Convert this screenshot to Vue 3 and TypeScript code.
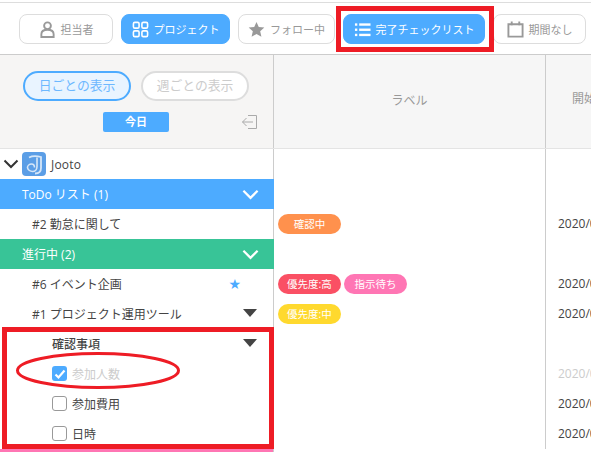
<script setup lang="ts">
const tools = [
  { label: "担当者", icon: "user", on: false, w: 94 },
  { label: "プロジェクト", icon: "grid", on: true, w: 109 },
  { label: "フォロー中", icon: "star", on: false, w: 97 },
  { label: "完了チェックリスト", icon: "list", on: true, w: 142 },
  { label: "期間なし", icon: "cal", on: false, w: 93 },
]

const rows = [
  { kind: "project", text: "Jooto" },
  { kind: "todo", text: "ToDo リスト (1)" },
  { kind: "task", text: "#2 勤怠に関して", tags: [{ t: "確認中", c: "#ff914d" }], date: "2020/0" },
  { kind: "doing", text: "進行中 (2)" },
  { kind: "task", text: "#6 イベント企画", star: true, tags: [{ t: "優先度:高", c: "#fa5064" }, { t: "指示待ち", c: "#ff76b4" }], date: "2020/0" },
  { kind: "task", text: "#1 プロジェクト運用ツール", arrow: true, tags: [{ t: "優先度:中", c: "#ffd92e" }], date: "2020/0" },
  { kind: "group", text: "確認事項", arrow: true },
  { kind: "check", text: "参加人数", done: true, date: "2020/0" },
  { kind: "check", text: "参加費用", date: "2020/0" },
  { kind: "check", text: "日時", date: "2020/0" },
]
</script>

<template>
  <div class="page">
    <div class="toolbar">
      <button v-for="b in tools" :key="b.label" class="tool" :class="{ on: b.on }" :style="{ width: b.w + 'px' }">
        <svg v-if="b.icon === 'user'" class="ic" viewBox="0 0 18 18" fill="none" stroke="currentColor" stroke-width="2">
          <circle cx="9" cy="5" r="3.6" />
          <path d="M2.500 17v-3c0-3 2.700-4.800 6.500-4.800s6.500 1.800 6.500 4.800v3z" />
        </svg>
        <svg v-else-if="b.icon === 'grid'" class="ic" viewBox="0 0 18 18" fill="none" stroke="currentColor" stroke-width="1.700">
          <rect x="1.500" y="1.500" width="6" height="6" rx="1.500" />
          <rect x="10.500" y="1.500" width="6" height="6" rx="1.500" />
          <rect x="1.500" y="10.500" width="6" height="6" rx="1.500" />
          <rect x="10.500" y="10.500" width="6" height="6" rx="1.500" />
        </svg>
        <svg v-else-if="b.icon === 'star'" class="ic" viewBox="0 0 18 18" fill="currentColor">
          <path d="M9 1l2.400 5.400 5.900.6-4.400 3.900 1.300 5.800L9 13.700l-5.200 3 1.300-5.800L.7 7l5.900-.6z" />
        </svg>
        <svg v-else-if="b.icon === 'list'" class="ic" viewBox="0 0 18 18" fill="currentColor">
          <rect x="1" y="2.500" width="2.500" height="2.500" />
          <rect x="1" y="8" width="2.500" height="2.500" />
          <rect x="1" y="13.500" width="2.500" height="2.500" />
          <rect x="5.500" y="2.500" width="12" height="2.500" />
          <rect x="5.500" y="8" width="12" height="2.500" />
          <rect x="5.500" y="13.500" width="12" height="2.500" />
        </svg>
        <svg v-else class="ic" viewBox="0 0 18 18" fill="none" stroke="currentColor" stroke-width="2">
          <path d="M1.500 3.500h15v13h-15z" />
          <path d="M5 .5v4M13 .5v4" />
        </svg>
        <span>{{ b.label }}</span>
      </button>
    </div>

    <div class="head">
      <div class="head-left">
        <div class="modes">
          <span class="mode active">日ごとの表示</span>
          <span class="mode">週ごとの表示</span>
        </div>
        <div class="today-line">
          <span class="today">今日</span>
          <svg class="exit" viewBox="0 0 18 16" fill="none" stroke="#aaa" stroke-width="1">
            <path d="M7 1.500h8.500v13H7" />
            <path d="M12 8H1.500M5.500 4l-4 4 4 4" />
          </svg>
        </div>
      </div>
      <div class="head-label">ラベル</div>
      <div class="head-date">開始日</div>
    </div>

    <div class="body">
      <div v-for="(r, i) in rows" :key="i" class="row">
        <div class="name" :class="r.kind">
          <template v-if="r.kind === 'project'">
            <svg class="caret" viewBox="0 0 16 10" fill="none" stroke="#333" stroke-width="2">
              <path d="M1.500 1.500L8 8l6.500-6.500" />
            </svg>
            <svg class="logo" viewBox="0 0 24 24" fill="none" stroke="#d5e6f8">
              <rect width="24" height="24" rx="4" fill="#5b9ee6" stroke="none" />
              <path d="M7 5.500c3-1.500 8-1.500 12-.5v11c0 3.500-2.500 5.500-6 5.500" stroke-width="1.800" />
              <path d="M15 5.500v9c0 3-2 5-4.500 5S5.500 17.500 5.500 15.500 7.500 12 9.500 12s3 1.700 3 3.500" stroke-width="1.600" />
            </svg>
          </template>
          <span v-if="r.kind === 'check'" class="box" :class="{ done: r.done }">
            <svg v-if="r.done" viewBox="0 0 14 14" fill="none" stroke="#fff" stroke-width="2.200">
              <path d="M2.500 7.500l3 3 6-7" />
            </svg>
          </span>
          <span class="txt" :class="{ faded: r.done }">{{ r.text }}</span>
          <svg v-if="r.kind === 'todo' || r.kind === 'doing'" class="fold" viewBox="0 0 18 11" fill="none" stroke="#fff" stroke-width="2.400">
            <path d="M1.500 1.500L9 9l7.500-7.500" />
          </svg>
          <span v-if="r.star" class="star">★</span>
          <span v-if="r.arrow" class="tri"></span>
        </div>
        <div class="labels">
          <span v-for="t in r.tags" :key="t.t" class="tag" :style="{ background: t.c }">{{ t.t }}</span>
        </div>
        <div class="date" :class="{ faded: r.done }">{{ r.date }}</div>
      </div>
      <div class="row"><div class="name pink"></div></div>
    </div>

    <div class="mark mark-btn"></div>
    <div class="mark mark-list"></div>
    <svg class="mark-oval" viewBox="0 0 166 40" fill="none" stroke="#ee1c25" stroke-width="3">
      <ellipse cx="83" cy="19.500" rx="80.500" ry="17" />
    </svg>
  </div>
</template>

<style scoped>
.page {
  position: relative;
  width: 591px;
  height: 452px;
  overflow: hidden;
  background: #fff;
  font-family: "Open Sans", "Noto Sans CJK JP", sans-serif;
  font-size: 12px;
  color: #444;
}
.toolbar {
  display: flex;
  gap: 8px;
  height: 53px;
  margin-top: 2px;
  padding: 11px 0 0 19px;
  box-sizing: border-box;
  border-top: 1px solid #ddd;
  border-bottom: 1px solid #ccc;
}
.tool {
  display: flex;
  align-items: center;
  justify-content: center;
  gap: 5px;
  flex: none;
  height: 30px;
  padding: 0;
  border: 1px solid #ddd;
  border-radius: 8px;
  background: #fff;
  color: #999;
  font: inherit;
  font-size: 11px;
}
.tool.on {
  background: #4dabff;
  border-color: #4dabff;
  color: #fff;
}
.ic {
  width: 17px;
  height: 17px;
  flex: none;
}
.head {
  display: flex;
  height: 94px;
  border-bottom: 1px solid #e4e4e4;
  box-sizing: border-box;
  background: #f6f6f6;
}
.head-left {
  width: 274px;
  flex: none;
  box-sizing: border-box;
  border-right: 1px solid #ccc;
  background: #f6f5f4;
  padding-top: 16px;
}
.modes {
  display: flex;
  gap: 10px;
  padding-left: 23px;
}
.mode {
  width: 108px;
  height: 30px;
  box-sizing: border-box;
  border: 2px solid #ddd;
  border-radius: 15px;
  background: #fff;
  color: #ccc;
  font-size: 12.800px;
  line-height: 25px;
  text-align: center;
}
.mode.active {
  border-color: #4dabff;
  background: #e9f4ff;
  color: #6db8ff;
}
.today-line {
  display: flex;
  margin-top: 11px;
  padding-left: 103px;
  align-items: center;
}
.today {
  width: 66px;
  height: 20px;
  border-radius: 2px;
  background: #4dabff;
  color: #fff;
  font-size: 11px;
  font-weight: 700;
  line-height: 20px;
  text-align: center;
}
.exit {
  width: 18px;
  height: 16px;
  margin-left: 72px;
}
.head-label {
  width: 272px;
  flex: none;
  box-sizing: border-box;
  border-right: 1px solid #ccc;
  color: #999;
  font-size: 12px;
  text-align: center;
  padding-top: 36px;
}
.head-date {
  flex: 1;
  padding: 34px 0 0 26px;
  color: #999;
  white-space: nowrap;
}
.body {
  display: flex;
  flex-direction: column;
}
.row {
  display: flex;
  height: 30px;
  flex: none;
}
.name {
  position: relative;
  display: flex;
  align-items: center;
  width: 274px;
  flex: none;
  box-sizing: border-box;
  border-right: 1px solid #ccc;
  font-size: 12px;
  color: #444;
}
.project {
  padding-left: 3px;
}
.caret {
  width: 16px;
  height: 10px;
}
.logo {
  width: 24px;
  height: 24px;
  margin: 0 5px 0 3px;
}
.project .txt {
  font-size: 12px;
  letter-spacing: 0.2px;
}
.todo,
.doing {
  padding-left: 22px;
  color: #fff;
  border-right: none;
}
.todo {
  background: #4dabff;
}
.doing {
  background: #38c497;
}
.task {
  padding-left: 32px;
}
.group {
  padding-left: 52px;
  font-weight: 500;
}
.check {
  padding-left: 52px;
  padding-bottom: 1px;
}
.box {
  display: flex;
  align-items: center;
  justify-content: center;
  width: 15px;
  height: 15px;
  margin-right: 5px;
  box-sizing: border-box;
  border: 1px solid #999;
  border-radius: 3px;
}
.box.done {
  border: none;
  background: #4dabff;
}
.box svg {
  width: 14px;
  height: 14px;
}
.faded {
  color: #ccc;
}
.fold {
  position: absolute;
  right: 15px;
  top: 10px;
  width: 17px;
  height: 11px;
}
.star {
  position: absolute;
  right: 32px;
  top: 6px;
  color: #4dabff;
  font-size: 14px;
  line-height: 18px;
  font-family: "DejaVu Sans", sans-serif;
}
.tri {
  position: absolute;
  right: 16px;
  top: 10px;
  border-style: solid;
  border-width: 8px 7px 0;
  border-color: #444 transparent transparent;
}
.labels {
  display: flex;
  align-items: center;
  gap: 3px;
  width: 272px;
  flex: none;
  box-sizing: border-box;
  padding-left: 4px;
  border-right: 1px solid #ccc;
}
.tag {
  width: 63px;
  height: 20px;
  border-radius: 10px;
  color: #fff;
  font-size: 10.500px;
  line-height: 20px;
  text-align: center;
  white-space: nowrap;
}
.date {
  padding: 6px 0 0 12px;
  color: #444;
  font-size: 12px;
  white-space: nowrap;
}
.date.faded {
  color: #ccc;
}
.pink {
  background: #ff76b4;
}
.mark {
  position: absolute;
  box-sizing: border-box;
  border: 5px solid #ee1c25;
}
.mark-btn {
  left: 336px;
  top: 6px;
  width: 158px;
  height: 46px;
}
.mark-list {
  left: 2px;
  top: 327px;
  width: 272px;
  height: 122px;
}
.mark-oval {
  position: absolute;
  left: 15px;
  top: 351px;
  width: 166px;
  height: 40px;
}
</style>
